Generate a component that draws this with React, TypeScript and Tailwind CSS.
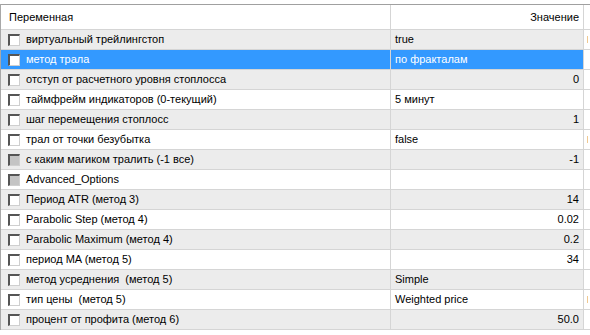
type Row = {
  name: string;
  value: string;
  align: 'left' | 'right';
  disabled?: boolean;
  extra?: boolean;
};

const rows: Row[] = [
  { name: 'виртуальный трейлингстоп', value: 'true', align: 'left', extra: true },
  { name: 'метод трала', value: 'по фракталам', align: 'left' },
  { name: 'отступ от расчетного уровня стоплосса', value: '0', align: 'right' },
  { name: 'таймфрейм индикаторов (0-текущий)', value: '5 минут', align: 'left' },
  { name: 'шаг перемещения стоплосс', value: '1', align: 'right' },
  { name: 'трал от точки безубытка', value: 'false', align: 'left', extra: true },
  { name: 'с каким магиком тралить (-1 все)', value: '-1', align: 'right', disabled: true },
  { name: 'Advanced_Options', value: '', align: 'left', disabled: true },
  { name: 'Период ATR (метод 3)', value: '14', align: 'right' },
  { name: 'Parabolic Step (метод 4)', value: '0.02', align: 'right' },
  { name: 'Parabolic Maximum (метод 4)', value: '0.2', align: 'right' },
  { name: 'период MA (метод 5)', value: '34', align: 'right' },
  { name: 'метод усреднения  (метод 5)', value: 'Simple', align: 'left' },
  { name: 'тип цены  (метод 5)', value: 'Weighted price', align: 'left', extra: true },
  { name: 'процент от профита (метод 6)', value: '50.0', align: 'right' },
];

const Checkbox = ({ disabled }: { disabled?: boolean }) => (
  <span
    className={`inline-block w-[12px] h-[12px] shrink-0 border-t-2 border-l-2 border-r border-b border-t-[#555] border-l-[#555] border-r-[#cfcfcf] border-b-[#cfcfcf] ${disabled ? 'bg-[#c4c4c4]' : 'bg-white'}`}
  />
);

const App = () => {
  const selected = 1;

  return (
    <div className="w-[590px] h-[335px] bg-white overflow-hidden pt-[4px] text-[11px] text-black" style={{ fontFamily: '"Liberation Sans", Arial, sans-serif' }}>
      <div className="w-[600px] border-l border-[#a8a8a8]">
        {/* header */}
        <div className="flex h-[26px] border-t border-t-[#a0a0a0] border-b border-b-[#d5d5d5] bg-white">
          <div className="w-[390px] flex items-center pl-[8px] border-r border-[#d5d5d5]">Переменная</div>
          <div className="w-[193px] flex items-center justify-end pr-[4px] border-r border-[#d5d5d5]">Значение</div>
          <div className="flex-1" />
        </div>

        {rows.map((r, i) => {
          const isSel = i === selected;
          const bg = isSel ? 'bg-[#3399ff] text-white' : i % 2 === 0 ? 'bg-[#ececec]' : 'bg-white';
          return (
            <div key={i} className="flex h-[20px] border-b border-[#d5d5d5]">
              <div className={`w-[390px] flex items-center pl-[7px] gap-[6px] border-r border-[#d5d5d5] ${bg}`}>
                <Checkbox disabled={r.disabled} />
                <span className="whitespace-pre">{r.name}</span>
              </div>
              <div className={`w-[193px] flex items-center px-[4px] border-r border-[#d5d5d5] ${r.align === 'right' ? 'justify-end' : ''} ${bg}`}>
                {r.value}
              </div>
              <div className="flex-1 flex items-center pl-[3px]">
                {r.extra && <span className="block w-[1px] h-[7px] bg-[#f0c890]" />}
              </div>
            </div>
          );
        })}
      </div>
    </div>
  );
};

export default App;
